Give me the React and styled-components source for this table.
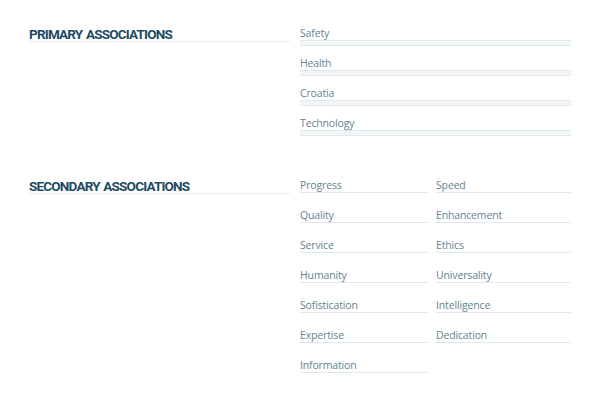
import React from "react";
import styled, { createGlobalStyle } from "styled-components";

const Global = createGlobalStyle`
  html, body { margin: 0; padding: 0; background: #ffffff; }
  body { font-family: "Open Sans", "Noto Sans", sans-serif; }
`;

const Page = styled.div`
  width: 600px;
  height: 400px;
  box-sizing: border-box;
  padding: 25px 29px 0 28px;
  display: flex;
  flex-direction: column;
  gap: 32px;
`;

const Section = styled.section`
  display: grid;
  grid-template-columns: 262px 271px;
  column-gap: 10px;
  align-items: start;
`;

const Title = styled.h2`
  margin: 0;
  padding: 1px 0 0 1px;
  height: 15px;
  line-height: 16px;
  font-family: "Roboto", sans-serif;
  font-weight: 700;
  font-size: 13.5px;
  letter-spacing: -0.8px;
  word-spacing: 1px;
  color: #1d4a63;
  border-bottom: 1px solid #e6ecef;
  text-transform: uppercase;
`;

const List = styled.div`
  display: grid;
  grid-template-columns: ${(p) => (p.$cols === 2 ? "128px 135px" : "1fr")};
  column-gap: 8px;
`;

const Item = styled.div`
  height: 30px;
  box-sizing: border-box;
  display: flex;
  flex-direction: column;
`;

const Label = styled.span`
  display: block;
  height: 15px;
  line-height: 17px;
  font-family: "Open Sans", sans-serif;
  font-size: 10.5px;
  color: #62838f;
  letter-spacing: -0.15px;
`;

const DoubleRule = styled.div`
  height: 4px;
  border-top: 1px solid #e2e9ec;
  border-bottom: 1px solid #e2e9ec;
  background: #f2f5f6;
`;

const SingleRule = styled.div`
  height: 0;
  border-top: 1px solid #e2e9ec;
`;

const primary = ["Safety", "Health", "Croatia", "Technology"];
const secondary = [
  "Progress", "Speed",
  "Quality", "Enhancement",
  "Service", "Ethics",
  "Humanity", "Universality",
  "Sofistication", "Intelligence",
  "Expertise", "Dedication",
  "Information",
];

export default function App() {
  return (
    <>
      <Global />
      <Page>
        <Section>
          <Title>Primary Associations</Title>
          <List>
            {primary.map((t) => (
              <Item key={t}>
                <Label>{t}</Label>
                <DoubleRule />
              </Item>
            ))}
          </List>
        </Section>
        <Section>
          <Title>Secondary Associations</Title>
          <List $cols={2}>
            {secondary.map((t) => (
              <Item key={t}>
                <Label>{t}</Label>
                <SingleRule />
              </Item>
            ))}
          </List>
        </Section>
      </Page>
    </>
  );
}
